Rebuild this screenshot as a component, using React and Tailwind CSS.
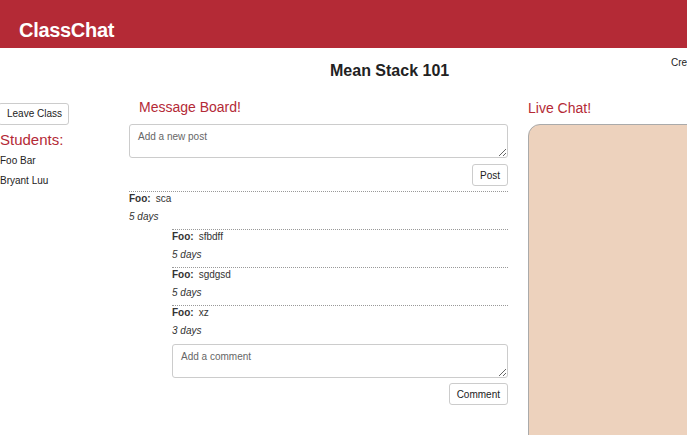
import React from "react"

const comments = [
  { user: "Foo", text: "sfbdff", when: "5 days" },
  { user: "Foo", text: "sgdgsd", when: "5 days" },
  { user: "Foo", text: "xz", when: "3 days" },
]

function Entry({ user, text, when }) {
  return (
    <div className="border-t border-dotted border-[#999] pb-[6px]">
      <p className="text-[10px] leading-[13px]">
        <span className="font-bold">{user}:</span>
        <span className="ml-[5px]">{text}</span>
      </p>
      <p className="text-[10px] leading-[13px] italic mt-[5px]">{when}</p>
    </div>
  )
}

export default function App() {
  return (
    <div
      className="w-[687px] h-[435px] overflow-hidden bg-white text-[#333]"
      style={{ fontFamily: '"Liberation Sans", Arial, sans-serif' }}
    >
      <header className="h-[48px] bg-[#b42a36] flex items-center pl-[19px] pt-[12px]">
        <h1 className="text-white text-[20px] font-bold leading-[24px] tracking-[-0.3px]">ClassChat</h1>
      </header>

      <div className="flex h-[52px] overflow-hidden">
        <div className="w-[671px] shrink-0 pl-[330px] pt-[14px]">
          <h2 className="text-[16px] font-bold leading-[18px] text-[#222]">Mean Stack 101</h2>
        </div>
        <div className="shrink-0 whitespace-nowrap text-[10px] leading-[12px] pt-[9px] text-[#222]">Created by Foo Bar</div>
      </div>

      <div className="flex">
        <aside className="w-[129px] shrink-0">
          <button className="-ml-[2px] h-[22px] pl-[8px] pr-[6px] text-[10px] border border-[#ccc] rounded-[3px] bg-white text-[#222]">
            Leave Class
          </button>
          <h3 className="mt-[6px] text-[15px] leading-[18px] text-[#b42a36]">Students:</h3>
          <p className="mt-[6px] text-[10px] leading-[12px] text-[#222]">Foo Bar</p>
          <p className="mt-[8px] text-[10px] leading-[12px] text-[#222]">Bryant Luu</p>
        </aside>

        <main className="w-[379px] shrink-0">
          <h3 className="ml-[10px] text-[14px] leading-[14px] text-[#b42a36]">Message Board!</h3>
          <textarea
            placeholder="Add a new post"
            className="block mt-[10px] w-full h-[34px] border border-[#ccc] rounded-[3px] px-[8px] py-[4px] text-[10px] placeholder:text-[#666] outline-none"
          />
          <div className="flex justify-end mt-[6px]">
            <button className="h-[22px] px-[7px] text-[10px] border border-[#ccc] rounded-[3px] bg-white text-[#222]">Post</button>
          </div>
          <div className="mt-[5px]">
            <Entry user="Foo" text="sca" when="5 days" />
            <div className="ml-[43px]">
              {comments.map((c, i) => (
                <Entry key={i} {...c} />
              ))}
              <textarea
                placeholder="Add a comment"
                className="block mt-[1px] w-full h-[34px] border border-[#ccc] rounded-[3px] px-[8px] py-[4px] text-[10px] placeholder:text-[#666] outline-none"
              />
              <div className="flex justify-end mt-[5px]">
                <button className="h-[22px] px-[7px] text-[10px] border border-[#ccc] rounded-[3px] bg-white text-[#222]">Comment</button>
              </div>
            </div>
          </div>
        </main>

        <section className="ml-[20px] flex-1 min-w-0">
          <h3 className="text-[14px] leading-[16px] text-[#b42a36]">Live Chat!</h3>
          <div className="mt-[8px] h-[320px] w-[200px] bg-[#edd2bd] border border-[#aaa] rounded-tl-[12px]" />
        </section>
      </div>
    </div>
  )
}
